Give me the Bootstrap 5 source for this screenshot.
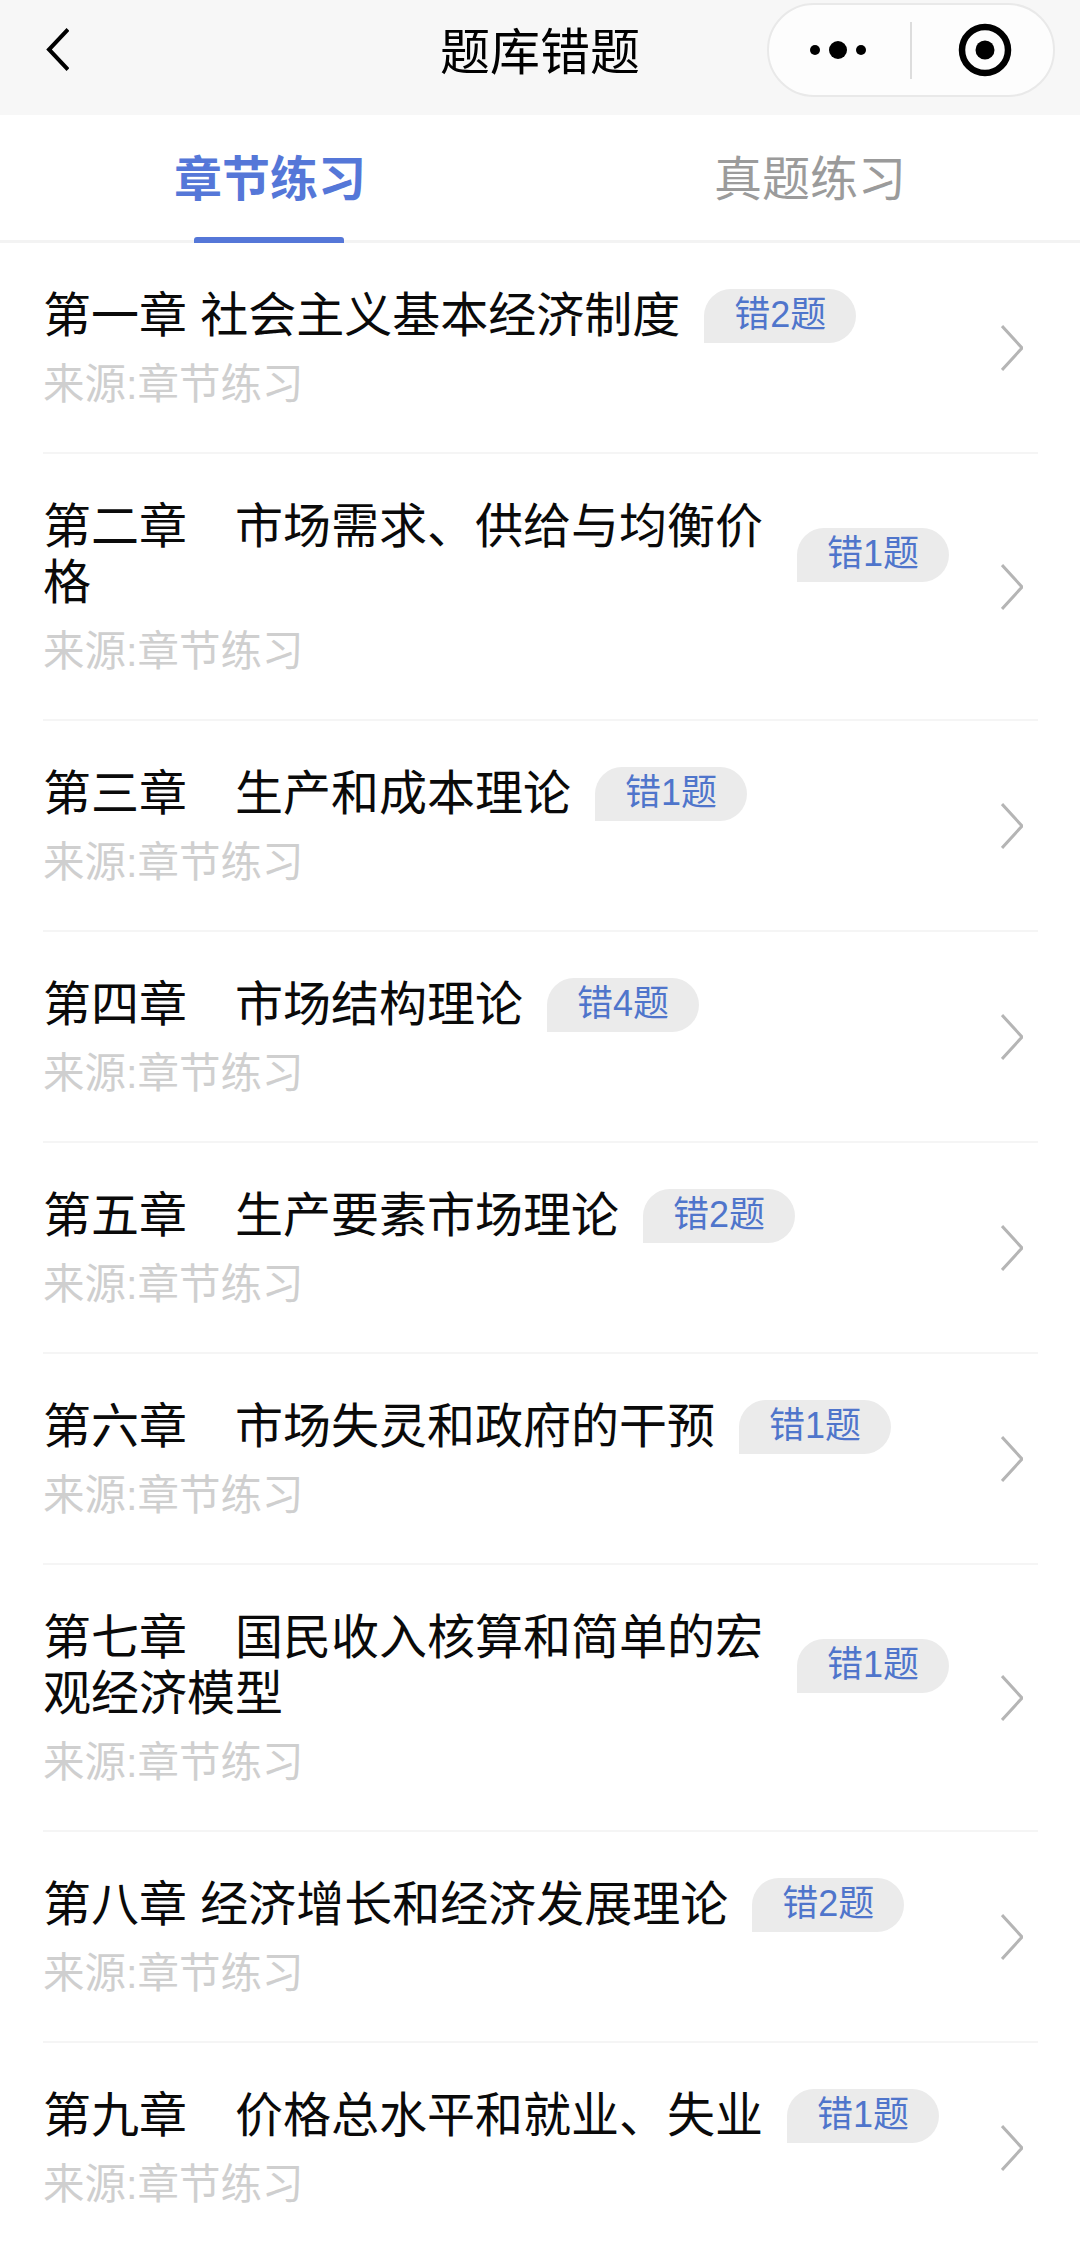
<!DOCTYPE html>
<html lang="zh-CN">
<head>
<meta charset="utf-8">
<title>题库错题</title>
<link href="https://cdn.jsdelivr.net/npm/bootstrap@5.3.0/dist/css/bootstrap.min.css" rel="stylesheet">
<style>
html,body{height:100%;}
body{background:#fff;color:#000;font-family:"Liberation Sans","Noto Sans CJK SC",sans-serif;overflow:hidden;}
.topbar{height:115px;background:#f7f7f7;padding-left:46px;padding-right:25px;position:relative;}
.back-ico{width:23px;height:43px;display:block;margin-top:-16px;}
.top-title{position:absolute;left:0;right:0;top:23px;text-align:center;font-size:50px;line-height:60px;color:#000;}
.capsule{position:relative;width:288px;height:94px;margin-top:3px;margin-bottom:18px;border:2px solid #e9e9e9;border-radius:47px;background:#fdfdfd;}
.capsule svg{position:absolute;left:-2px;top:-2px;width:288px;height:94px;}
.tabbar{height:128px;border-bottom:3px solid #f3f3f3;}
.tab-item{flex:1 1 0;position:relative;text-align:center;font-size:48px;line-height:64px;padding-top:33px;color:#9b9b9b;}
.tab-item.on{color:#5577d8;font-weight:700;}
.tab-item.on::after{content:"";position:absolute;left:194px;top:122px;width:150px;height:6px;border-radius:3px 3px 0 0;background:#5577d8;}
.chap-list{padding:0 42px 0 43px;}
.chap{padding:45px 0 38px;border-bottom:2px solid #f5f5f5;}
.chap:last-child{border-bottom:0;}
.chap-main{width:906px;flex:0 0 906px;}
.chap-title{font-size:48px;line-height:56px;color:#0a0a0a;min-width:0;}
.chap-badge{flex:0 0 auto;height:54px;line-height:52px;margin-left:24px;padding:0 30px;font-size:36px;color:#4f75cb;background:#ebebeb;border-radius:27px 27px 27px 0;}
.chap-src{font-size:41.5px;line-height:58px;margin-top:12px;color:#cfcfcf;}
.chap-go{width:22px;height:46px;margin-left:52px;margin-bottom:6px;flex:0 0 22px;}
</style>
</head>
<body>
<div class="topbar d-flex align-items-center justify-content-between">
  <svg class="back-ico" viewBox="0 0 23 43" fill="none" stroke="#000" stroke-width="4"><path d="M22 1.5 3 21.5 22 41.5"/></svg>
  <div class="top-title">题库错题</div>
  <div class="capsule">
    <svg viewBox="0 0 288 94">
      <circle cx="48" cy="47" r="5" fill="#000"/><circle cx="71" cy="47" r="9" fill="#000"/><circle cx="94" cy="47" r="5" fill="#000"/>
      <rect x="143" y="19" width="2" height="57" fill="#ddd"/>
      <circle cx="218" cy="47" r="23" fill="none" stroke="#000" stroke-width="6.5"/><circle cx="218" cy="47" r="9.5" fill="#000"/>
    </svg>
  </div>
</div>
<div class="tabbar d-flex">
  <div class="tab-item on">章节练习</div>
  <div class="tab-item">真题练习</div>
</div>
<div class="chap-list">
  <div class="chap d-flex align-items-center">
    <div class="chap-main"><div class="d-flex align-items-center"><div class="chap-title">第一章 社会主义基本经济制度</div><div class="chap-badge">错2题</div></div><div class="chap-src">来源:章节练习</div></div>
    <svg class="chap-go" viewBox="0 0 22 46" fill="none" stroke="#b5b5b5" stroke-width="3"><path d="M1 1 21 23 1 45"/></svg>
  </div>
  <div class="chap d-flex align-items-center">
    <div class="chap-main"><div class="d-flex align-items-center"><div class="chap-title">第二章　市场需求、供给与均衡价格</div><div class="chap-badge">错1题</div></div><div class="chap-src">来源:章节练习</div></div>
    <svg class="chap-go" viewBox="0 0 22 46" fill="none" stroke="#b5b5b5" stroke-width="3"><path d="M1 1 21 23 1 45"/></svg>
  </div>
  <div class="chap d-flex align-items-center">
    <div class="chap-main"><div class="d-flex align-items-center"><div class="chap-title">第三章　生产和成本理论</div><div class="chap-badge">错1题</div></div><div class="chap-src">来源:章节练习</div></div>
    <svg class="chap-go" viewBox="0 0 22 46" fill="none" stroke="#b5b5b5" stroke-width="3"><path d="M1 1 21 23 1 45"/></svg>
  </div>
  <div class="chap d-flex align-items-center">
    <div class="chap-main"><div class="d-flex align-items-center"><div class="chap-title">第四章　市场结构理论</div><div class="chap-badge">错4题</div></div><div class="chap-src">来源:章节练习</div></div>
    <svg class="chap-go" viewBox="0 0 22 46" fill="none" stroke="#b5b5b5" stroke-width="3"><path d="M1 1 21 23 1 45"/></svg>
  </div>
  <div class="chap d-flex align-items-center">
    <div class="chap-main"><div class="d-flex align-items-center"><div class="chap-title">第五章　生产要素市场理论</div><div class="chap-badge">错2题</div></div><div class="chap-src">来源:章节练习</div></div>
    <svg class="chap-go" viewBox="0 0 22 46" fill="none" stroke="#b5b5b5" stroke-width="3"><path d="M1 1 21 23 1 45"/></svg>
  </div>
  <div class="chap d-flex align-items-center">
    <div class="chap-main"><div class="d-flex align-items-center"><div class="chap-title">第六章　市场失灵和政府的干预</div><div class="chap-badge">错1题</div></div><div class="chap-src">来源:章节练习</div></div>
    <svg class="chap-go" viewBox="0 0 22 46" fill="none" stroke="#b5b5b5" stroke-width="3"><path d="M1 1 21 23 1 45"/></svg>
  </div>
  <div class="chap d-flex align-items-center">
    <div class="chap-main"><div class="d-flex align-items-center"><div class="chap-title">第七章　国民收入核算和简单的宏观经济模型</div><div class="chap-badge">错1题</div></div><div class="chap-src">来源:章节练习</div></div>
    <svg class="chap-go" viewBox="0 0 22 46" fill="none" stroke="#b5b5b5" stroke-width="3"><path d="M1 1 21 23 1 45"/></svg>
  </div>
  <div class="chap d-flex align-items-center">
    <div class="chap-main"><div class="d-flex align-items-center"><div class="chap-title">第八章 经济增长和经济发展理论</div><div class="chap-badge">错2题</div></div><div class="chap-src">来源:章节练习</div></div>
    <svg class="chap-go" viewBox="0 0 22 46" fill="none" stroke="#b5b5b5" stroke-width="3"><path d="M1 1 21 23 1 45"/></svg>
  </div>
  <div class="chap d-flex align-items-center">
    <div class="chap-main"><div class="d-flex align-items-center"><div class="chap-title">第九章　价格总水平和就业、失业</div><div class="chap-badge">错1题</div></div><div class="chap-src">来源:章节练习</div></div>
    <svg class="chap-go" viewBox="0 0 22 46" fill="none" stroke="#b5b5b5" stroke-width="3"><path d="M1 1 21 23 1 45"/></svg>
  </div>
</div>
<script src="https://cdn.jsdelivr.net/npm/bootstrap@5.3.0/dist/js/bootstrap.bundle.min.js"></script>
</body>
</html>
